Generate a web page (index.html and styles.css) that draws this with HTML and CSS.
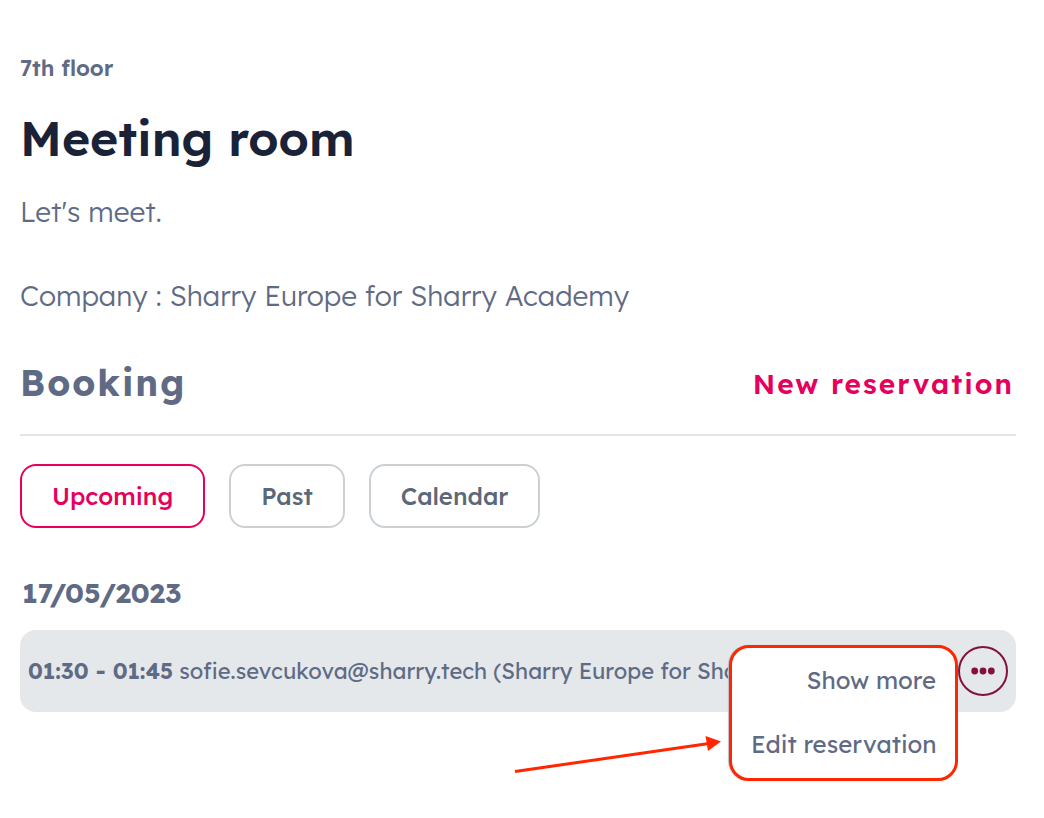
FILE: index.html
```html
<!DOCTYPE html>
<html lang="en">
<head>
    <meta charset="UTF-8">
    <meta name="viewport" content="width=device-width, initial-scale=1.0">
    <title>Meeting room</title>
    <link rel="stylesheet" href="styles.css">
</head>
<body>

    <main class="page">
        <p class="floor">7th floor</p>
        <h1 class="title">Meeting room</h1>
        <p class="description">Let's meet.<br><br>Company : Sharry Europe for Sharry Academy</p>

        <div class="booking-header">
            <h2 class="booking-title">Booking</h2>
            <a class="new-reservation" href="#">New reservation</a>
        </div>

        <div class="tabs">
            <button class="tab active" type="button">Upcoming</button>
            <button class="tab" type="button">Past</button>
            <button class="tab" type="button">Calendar</button>
        </div>

        <h3 class="date">17/05/2023</h3>

        <div class="reservation">
            <p class="reservation-text"><strong>01:30 - 01:45</strong> sofie.sevcukova@sharry.tech (Sharry Europe for Sharry</p>
            <button class="more" type="button" aria-label="More options">
                <svg width="24" height="8" viewBox="0 0 24 8" fill="currentColor">
                    <circle cx="3.7" cy="4" r="3.4"/>
                    <circle cx="12" cy="4" r="3.4"/>
                    <circle cx="20.3" cy="4" r="3.4"/>
                </svg>
            </button>

            <div class="menu">
                <button class="menu-item" type="button">Show more</button>
                <button class="menu-item" type="button">Edit reservation</button>
            </div>

            <svg class="arrow" width="210" height="44" viewBox="0 0 210 44">
                <path d="M2 37.500 L196 9.500" stroke="#ff2600" stroke-width="3"/>
                <path d="M192.500 2 L208 7.500 L195 17 Z" fill="#ff2600"/>
            </svg>
        </div>
    </main>

</body>
</html>
```
FILE: styles.css
```css
body {
    margin: 0;
    background: #fff;
    color: #5f6b85;
    font-family: Lexend, Inter, "Liberation Sans", sans-serif;
}
h1, h2, h3, p {
    margin: 0;
}
button {
    font-family: inherit;
    cursor: pointer;
}
.page {
    box-sizing: border-box;
    min-height: 100vh;
    padding: 54px 28px 100px 20px;
}
.floor {
    font-size: 22px;
    line-height: 28px;
    font-weight: 600;
}
.title {
    margin-top: 26px;
    color: #1a2238;
    font-size: 48px;
    line-height: 60px;
    font-weight: 600;
}
.description {
    margin-top: 23px;
    font-size: 28px;
    line-height: 42px;
    font-weight: 300;
}
.booking-header {
    display: flex;
    justify-content: space-between;
    align-items: center;
    margin-top: 42px;
    padding-bottom: 27px;
    border-bottom: 2px solid #e4e4e4;
}
.booking-title {
    font-size: 36px;
    line-height: 48px;
    font-weight: 700;
    letter-spacing: 2px;
}
.new-reservation {
    padding-right: 2px;
    color: #e6005c;
    font-size: 28px;
    font-weight: 600;
    letter-spacing: 2px;
    text-decoration: none;
}
.tabs {
    display: flex;
    gap: 24px;
    margin-top: 28px;
}
.tab {
    height: 64px;
    padding: 0 30px;
    border: 2px solid #cbd0d5;
    border-radius: 16px;
    background: #fff;
    color: #5b6878;
    font-size: 24px;
    font-weight: 500;
}
.tab.active {
    border-color: #e6005c;
    color: #e6005c;
}
.date {
    margin: 47px 0 19px 2px;
    font-size: 28px;
    line-height: 36px;
    font-weight: 700;
}
.reservation {
    position: relative;
    display: flex;
    align-items: center;
    height: 82px;
    padding: 0 8px;
    border-radius: 16px;
    background: #e4e8eb;
}
.reservation-text {
    flex: 1;
    min-width: 0;
    margin-right: 224px;
    overflow: hidden;
    font-size: 22px;
    white-space: nowrap;
}
.more {
    display: flex;
    justify-content: center;
    align-items: center;
    width: 50px;
    height: 50px;
    padding: 0;
    border: 2px solid #85103f;
    border-radius: 50%;
    background: none;
    color: #85103f;
}
.menu {
    position: absolute;
    top: 15px;
    right: 58px;
    display: flex;
    flex-direction: column;
    box-sizing: border-box;
    width: 229px;
    padding-bottom: 2px;
    border: 3px solid #ff2600;
    border-radius: 20px;
    background: #fff;
    box-shadow: -1px 0 1px #b9c0c8;
}
.menu-item {
    height: 64px;
    padding: 0 19px;
    border: none;
    background: none;
    color: #5f6b85;
    font-size: 24px;
    text-align: right;
    white-space: nowrap;
}
.arrow {
    position: absolute;
    top: 104px;
    right: 293px;
}
```
